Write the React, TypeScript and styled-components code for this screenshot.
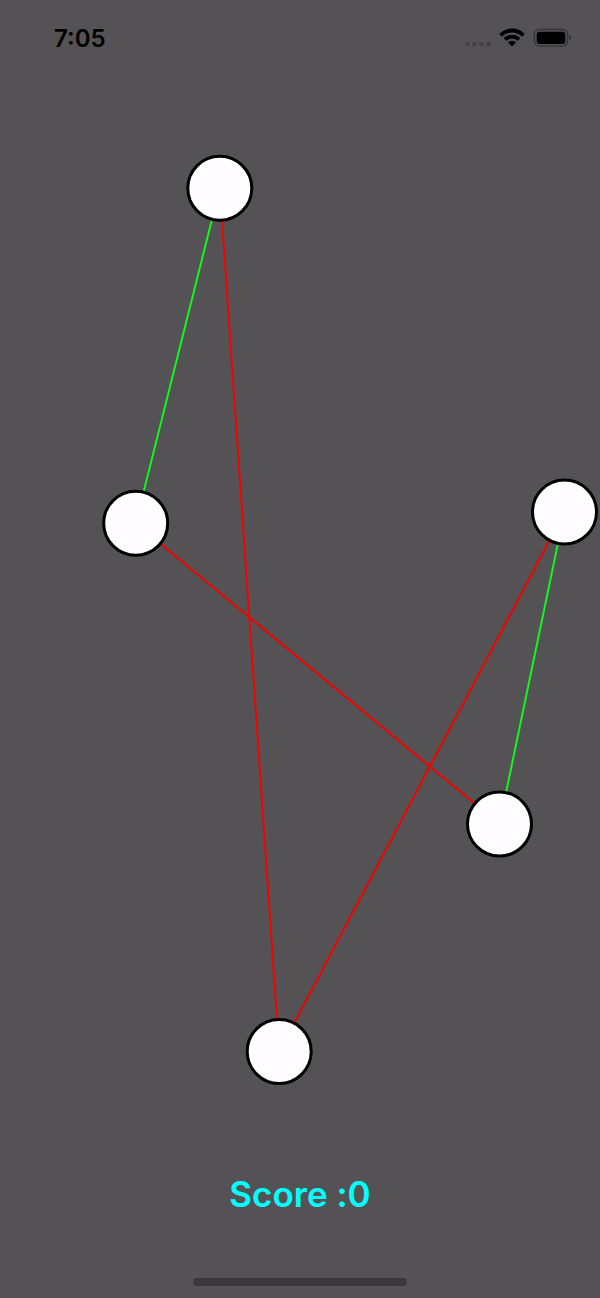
import React from 'react';
import styled, { createGlobalStyle } from 'styled-components';

const GlobalStyle = createGlobalStyle`
  * { box-sizing: border-box; }
  body { margin: 0; background: #545254; }
`;

const Screen = styled.main`
  display: flex;
  flex-direction: column;
  width: 100%;
  min-height: 100vh;
  background: #545254;
  font-family: Inter, 'Liberation Sans', sans-serif;
`;

const StatusBar = styled.header`
  display: flex;
  align-items: center;
  justify-content: space-between;
  height: 76px;
  padding: 0 28px 0 54px;
`;

const Clock = styled.time`
  padding-top: 2px;
  font-size: 24px;
  line-height: 28px;
  font-weight: 600;
  color: #000;
`;

const Indicators = styled.div`
  display: flex;
  align-items: center;
  gap: 8px;
`;

const Board = styled.svg`
  display: block;
  width: 100%;
  height: auto;
`;

const Node = styled.circle`
  fill: #fffdff;
  stroke: #000;
  stroke-width: 3px;
`;

const Edge = styled.line<{ $crossed: boolean }>`
  stroke: ${({ $crossed }) => ($crossed ? '#f00400' : '#14f51c')};
  stroke-width: 2px;
`;

const Score = styled.p`
  margin: 0;
  padding-top: 12px;
  font-size: 35px;
  line-height: 44px;
  font-weight: 600;
  font-feature-settings: 'calt' 0;
  text-align: center;
  color: #00ffff;
`;

const Footer = styled.footer`
  display: flex;
  justify-content: center;
  margin-top: auto;
  padding: 0 193px 12px;
`;

const HomeIndicator = styled.div`
  width: 100%;
  height: 8px;
  border-radius: 4px;
  background: #3a383a;
`;

const nodes = [
  { x: 219.8, y: 112.3 },
  { x: 135.7, y: 447.3 },
  { x: 564.5, y: 436 },
  { x: 499.5, y: 748 },
  { x: 279.2, y: 975.5 },
];

const edges = [
  { from: 0, to: 1, crossed: false },
  { from: 2, to: 3, crossed: false },
  { from: 0, to: 4, crossed: true },
  { from: 1, to: 3, crossed: true },
  { from: 2, to: 4, crossed: true },
];

function SignalIcon() {
  return (
    <svg width="27" height="20" viewBox="0 0 27 20" aria-hidden="true">
      {[3, 10, 17, 24].map((x) => (
        <circle key={x} cx={x + 0.4} cy="16.3" r="2.4" fill="#434143" />
      ))}
    </svg>
  );
}

function WifiIcon() {
  return (
    <svg width="26" height="20" viewBox="0 0 26 20" aria-hidden="true">
      <path
        d="M13 .6C8.300 .6 4 2.400 .8 5.500a.6.6 0 0 0 0 .9l1.800 1.800a.6.6 0 0 0 .9 0C6 5.800 9.300 4.400 13 4.400s7 1.400 9.500 3.800a.6.6 0 0 0 .9 0l1.800-1.800a.6.6 0 0 0 0-.9C22 2.400 17.700 .6 13 .6z"
      />
      <path
        d="M13 6.800c-3 0-5.700 1.100-7.800 3a.6.6 0 0 0 0 .9L7 12.500a.6.6 0 0 0 .9 0c1.400-1.200 3.200-1.900 5.100-1.900s3.700.7 5.100 1.900a.6.6 0 0 0 .9 0l1.800-1.800a.6.6 0 0 0 0-.9c-2.100-1.900-4.800-3-7.800-3z"
      />
      <path d="M13 12.900c-1.300 0-2.500.4-3.500 1.200a.6.6 0 0 0 0 .9l3.100 3.100a.6.6 0 0 0 .8 0l3.100-3.100a.6.6 0 0 0 0-.9c-1-.8-2.200-1.200-3.500-1.200z" />
    </svg>
  );
}

function BatteryIcon() {
  return (
    <svg width="39" height="20" viewBox="0 0 39 20" aria-hidden="true">
      <rect x="1.400" y="1.500" width="33.200" height="16.600" rx="5" fill="none" stroke="#353335" strokeWidth="1.300" />
      <rect x="3.700" y="3.700" width="28.600" height="12.300" rx="3" fill="#000" />
      <path d="M36.200 7c1.200.4 2 1.500 2 2.800s-.8 2.400-2 2.800z" fill="#353335" />
    </svg>
  );
}

export default function App() {
  return (
    <Screen>
      <GlobalStyle />
      <StatusBar>
        <Clock>7:05</Clock>
        <Indicators>
          <SignalIcon />
          <WifiIcon />
          <BatteryIcon />
        </Indicators>
      </StatusBar>
      <Board viewBox="0 0 600 1084" role="img" aria-label="Untangle board">
        {edges.map(({ from, to, crossed }) => (
          <Edge
            key={`${from}-${to}`}
            $crossed={crossed}
            x1={nodes[from].x}
            y1={nodes[from].y}
            x2={nodes[to].x}
            y2={nodes[to].y}
          />
        ))}
        {nodes.map(({ x, y }, i) => (
          <Node key={i} cx={x} cy={y} r="32" />
        ))}
      </Board>
      <Score>Score :0</Score>
      <Footer>
        <HomeIndicator />
      </Footer>
    </Screen>
  );
}
